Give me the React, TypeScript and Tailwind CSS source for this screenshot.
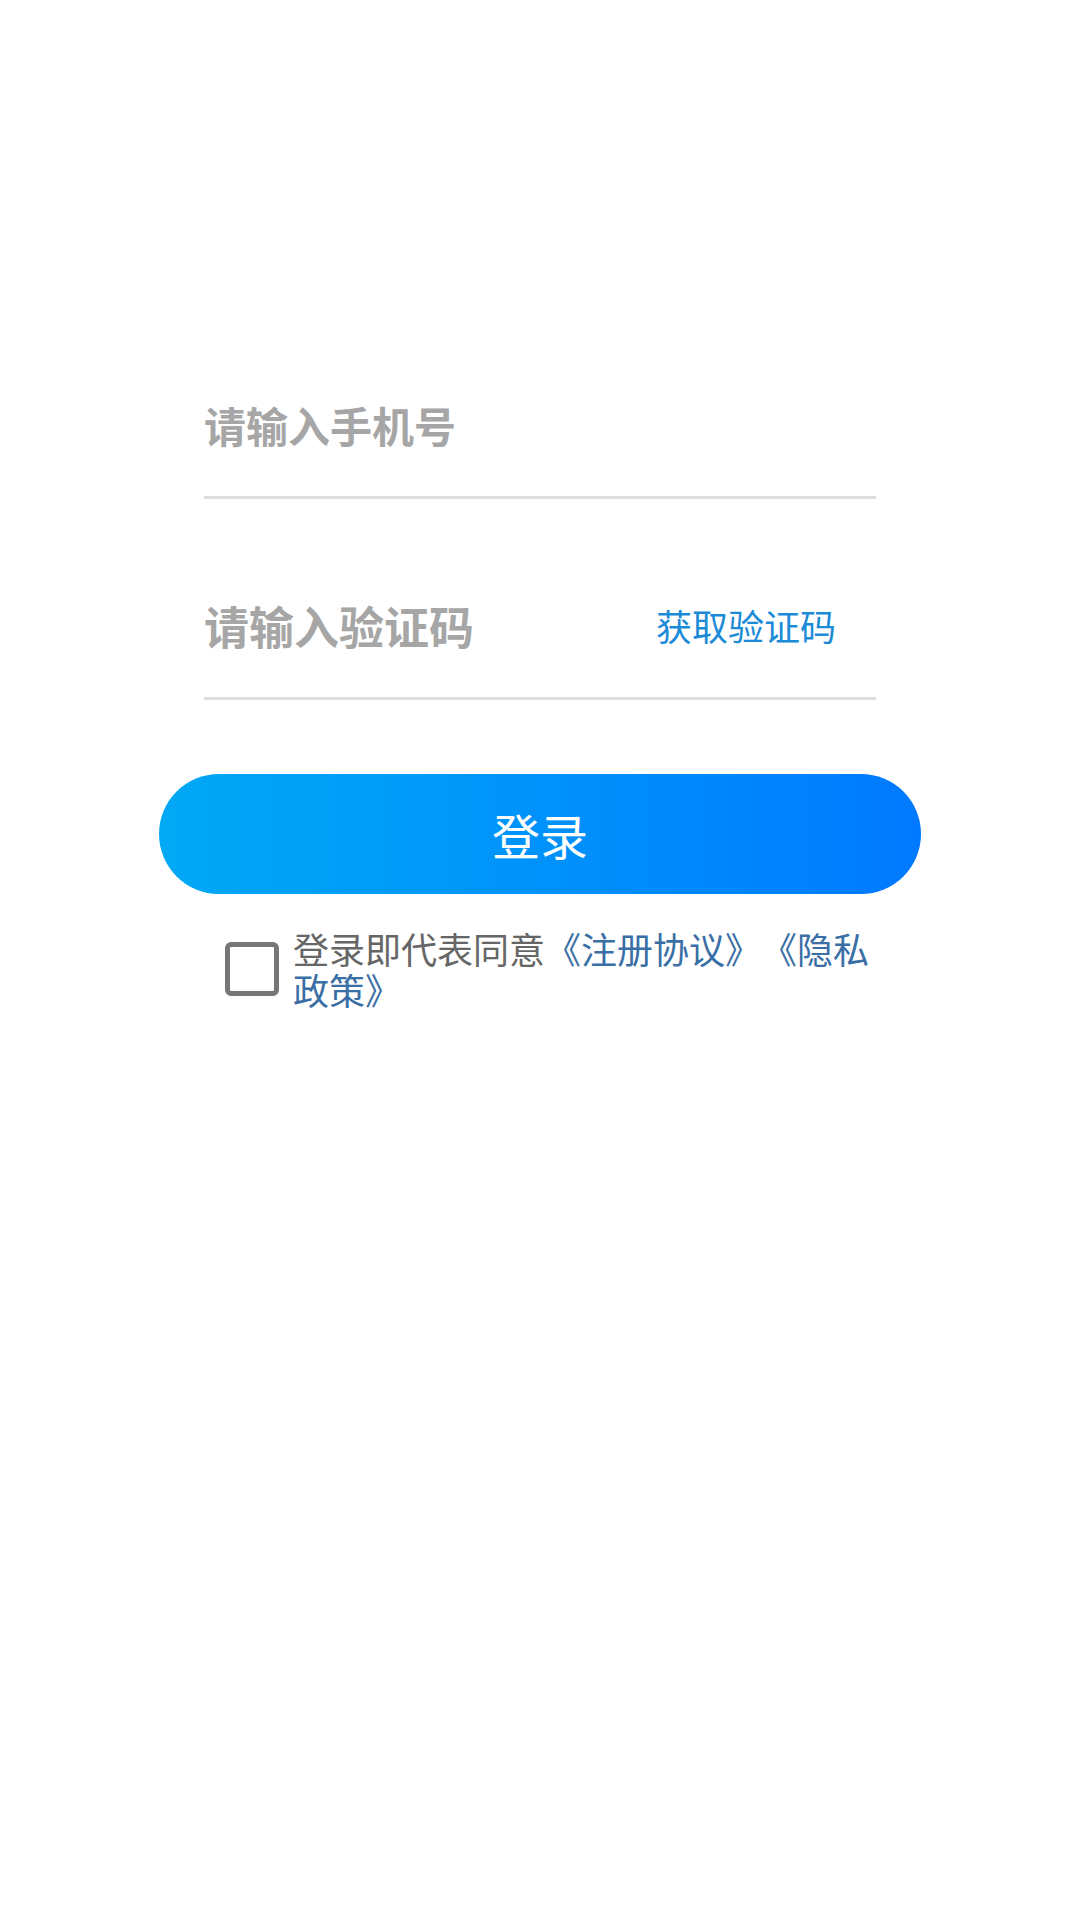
import React from "react";

const cjk = { fontFamily: '"Noto Sans CJK SC", "Noto Sans", sans-serif' };

export default function App() {
  return (
    <div className="w-[1080px] h-[1920px] bg-white flex flex-col items-center [text-spacing-trim:space-all]" style={cjk}>
      <div className="w-[672px] mt-[353px] h-[146px] border-b-[3px] border-[#dddddd] flex items-center">
        <input
          className="w-full bg-transparent outline-none text-[42px] font-bold text-[#333] placeholder:text-[#a6a6a6] leading-none"
          placeholder="请输入手机号"
        />
      </div>
      <div className="w-[672px] mt-[54px] h-[147px] border-b-[3px] border-[#dddddd] flex items-center">
        <input
          className="flex-1 min-w-0 bg-transparent outline-none text-[45px] font-bold text-[#333] placeholder:text-[#a6a6a6] leading-none"
          placeholder="请输入验证码"
        />
        <span className="text-[36px] text-[#1b8bd8] pr-[40px] whitespace-nowrap leading-none">获取验证码</span>
      </div>
      <button className="mt-[74px] w-[762px] h-[120px] rounded-full bg-gradient-to-r from-[#03a9f5] to-[#0079ff] text-white text-[48px] leading-none flex items-center justify-center">
        登录
      </button>
      <div className="w-[1080px] mt-[34px] pl-[225px] flex items-start">
        <div className="mt-[14px] w-[54px] h-[54px] border-[5px] border-[#777777] rounded-[6px] shrink-0" />
        <p className="ml-[14px] w-[590px] text-[36px] leading-[41px] text-[#666666] [text-spacing-trim:space-all]">
          登录即代表同意<span className="text-[#3a6fa6]">《注册协议》《隐私政策》</span>
        </p>
      </div>
    </div>
  );
}
